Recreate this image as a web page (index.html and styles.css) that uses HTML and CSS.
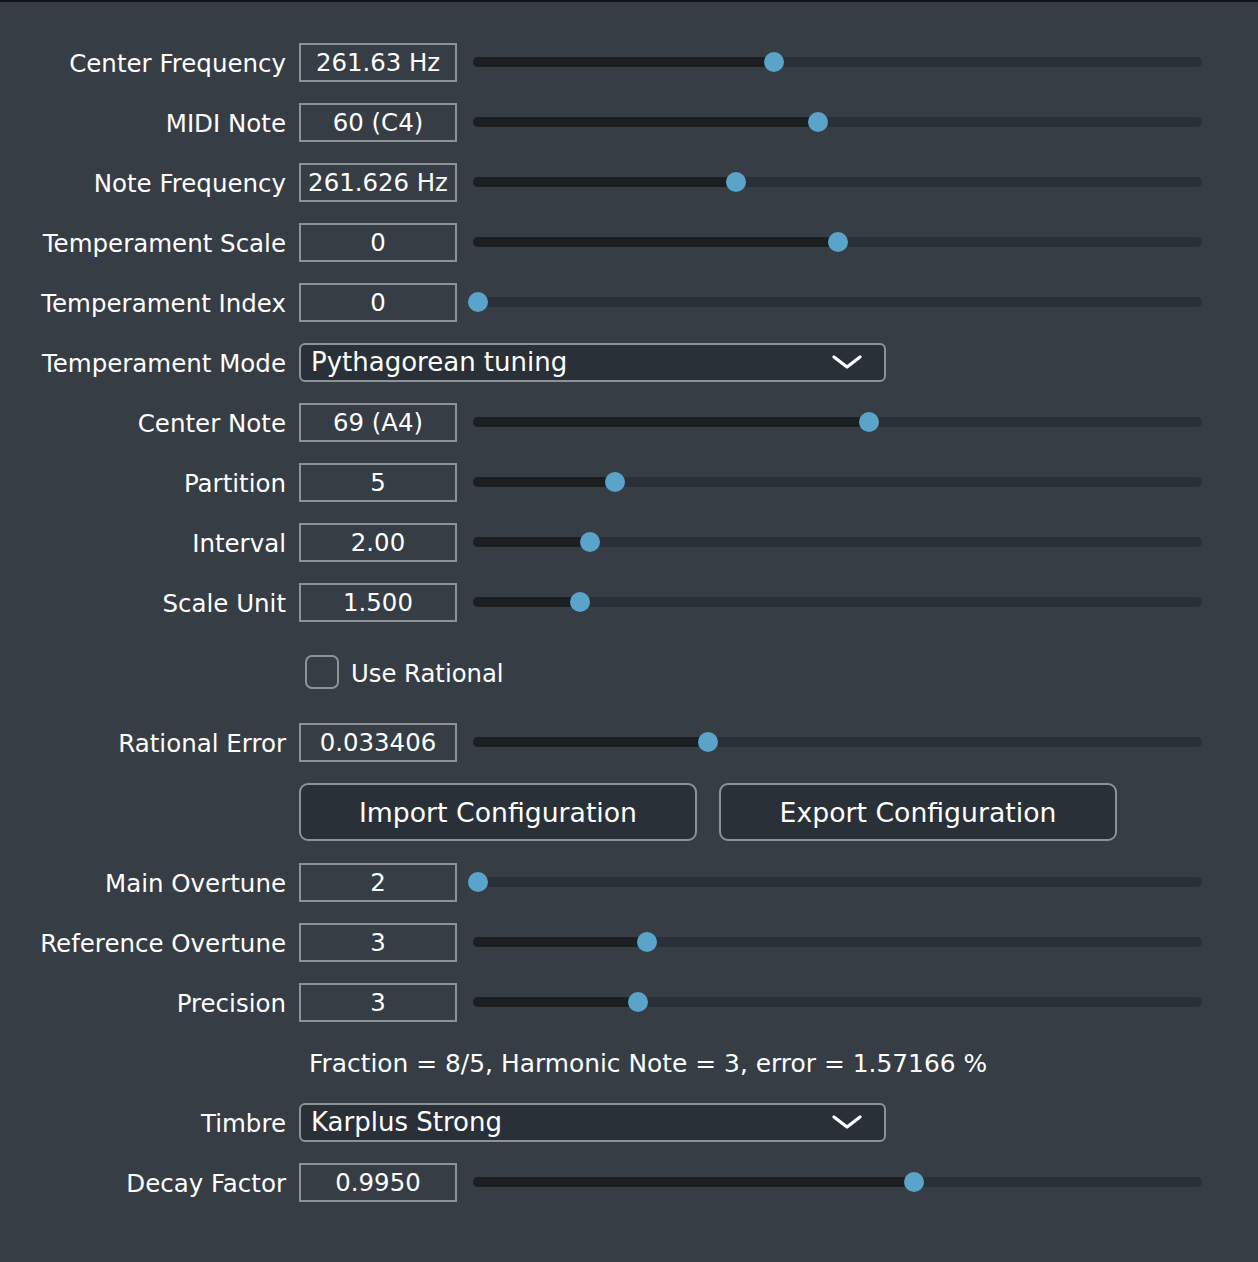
FILE: index.html
```html
<!DOCTYPE html>
<html>
<head>
<meta charset="utf-8">
<link rel="stylesheet" href="styles.css">
</head>
<body>
<div class="panel">
  <div class="row"><div class="label">Center Frequency</div><div class="value">261.63 Hz</div><div class="track"><div class="fill" style="width:301px"></div><div class="thumb" style="left:301px"></div></div></div>
  <div class="row"><div class="label">MIDI Note</div><div class="value">60 (C4)</div><div class="track"><div class="fill" style="width:345px"></div><div class="thumb" style="left:345px"></div></div></div>
  <div class="row"><div class="label">Note Frequency</div><div class="value">261.626 Hz</div><div class="track"><div class="fill" style="width:263px"></div><div class="thumb" style="left:263px"></div></div></div>
  <div class="row"><div class="label">Temperament Scale</div><div class="value">0</div><div class="track"><div class="fill" style="width:365px"></div><div class="thumb" style="left:365px"></div></div></div>
  <div class="row"><div class="label">Temperament Index</div><div class="value">0</div><div class="track"><div class="fill" style="width:5px"></div><div class="thumb" style="left:5px"></div></div></div>
  <div class="row"><div class="label">Temperament Mode</div><div class="combo"><span>Pythagorean tuning</span><svg class="chev" width="30" height="16" viewBox="0 0 30 16"><path d="M2 3 L15 13 L28 3" fill="none" stroke="#ffffff" stroke-width="3.2" stroke-linecap="round" stroke-linejoin="round"/></svg></div></div>
  <div class="row"><div class="label">Center Note</div><div class="value">69 (A4)</div><div class="track"><div class="fill" style="width:396px"></div><div class="thumb" style="left:396px"></div></div></div>
  <div class="row"><div class="label">Partition</div><div class="value">5</div><div class="track"><div class="fill" style="width:142px"></div><div class="thumb" style="left:142px"></div></div></div>
  <div class="row"><div class="label">Interval</div><div class="value">2.00</div><div class="track"><div class="fill" style="width:117px"></div><div class="thumb" style="left:117px"></div></div></div>
  <div class="row"><div class="label">Scale Unit</div><div class="value">1.500</div><div class="track"><div class="fill" style="width:107px"></div><div class="thumb" style="left:107px"></div></div></div>
  <div class="row tall"><div class="label"></div><div class="check"><div class="box"></div><span>Use Rational</span></div></div>
  <div class="row"><div class="label">Rational Error</div><div class="value">0.033406</div><div class="track"><div class="fill" style="width:235px"></div><div class="thumb" style="left:235px"></div></div></div>
  <div class="row tall"><div class="label"></div><div class="buttons"><div class="btn">Import Configuration</div><div class="btn">Export Configuration</div></div></div>
  <div class="row"><div class="label">Main Overtune</div><div class="value">2</div><div class="track"><div class="fill" style="width:5px"></div><div class="thumb" style="left:5px"></div></div></div>
  <div class="row"><div class="label">Reference Overtune</div><div class="value">3</div><div class="track"><div class="fill" style="width:174px"></div><div class="thumb" style="left:174px"></div></div></div>
  <div class="row"><div class="label">Precision</div><div class="value">3</div><div class="track"><div class="fill" style="width:165px"></div><div class="thumb" style="left:165px"></div></div></div>
  <div class="row"><div class="label"></div><div class="info">Fraction = 8/5, Harmonic Note = 3, error = 1.57166 %</div></div>
  <div class="row"><div class="label">Timbre</div><div class="combo"><span>Karplus Strong</span><svg class="chev" width="30" height="16" viewBox="0 0 30 16"><path d="M2 3 L15 13 L28 3" fill="none" stroke="#ffffff" stroke-width="3.2" stroke-linecap="round" stroke-linejoin="round"/></svg></div></div>
  <div class="row"><div class="label">Decay Factor</div><div class="value">0.9950</div><div class="track"><div class="fill" style="width:441px"></div><div class="thumb" style="left:441px"></div></div></div>
</div>
</body>
</html>
```

FILE: styles.css
```css
html, body {
  margin: 0;
  padding: 0;
  background: #363d45;
}
body {
  width: 1258px;
  height: 1262px;
  overflow: hidden;
  border-top: 2px solid #131517;
  box-sizing: border-box;
  font-family: "DejaVu Sans", Verdana, sans-serif;
  color: #ffffff;
}
.panel {
  padding-top: 30px;
  display: flex;
  flex-direction: column;
}
.row {
  height: 60px;
  display: flex;
  align-items: center;
}
.row.tall {
  height: 80px;
}
.label {
  width: 286px;
  margin-right: 13px;
  text-align: right;
  font-size: 24.5px;
  white-space: nowrap;
  flex: none;
  padding-top: 2px;
}
.value {
  width: 158px;
  height: 39px;
  box-sizing: border-box;
  border: 2px solid #8d9296;
  display: flex;
  align-items: center;
  justify-content: center;
  font-size: 24.4px;
  flex: none;
  padding-top: 1px;
}
.track {
  position: relative;
  margin-left: 16px;
  width: 729px;
  height: 10px;
  border-radius: 5px;
  background: #2a3038;
  flex: none;
}
.fill {
  height: 10px;
  border-radius: 5px 0 0 5px;
  background: #1b1f22;
}
.thumb {
  position: absolute;
  top: -5px;
  width: 20px;
  height: 20px;
  margin-left: -10px;
  border-radius: 50%;
  background: #5ba4c9;
}
.combo {
  width: 587px;
  height: 39px;
  box-sizing: border-box;
  border: 2px solid #8d9296;
  border-radius: 6px;
  background: #2a3038;
  display: flex;
  align-items: center;
  justify-content: space-between;
  padding: 0 22px 0 10px;
  font-size: 26px;
  flex: none;
}
.combo span {
  padding-bottom: 1px;
}
.chev {
  display: block;
}
.check {
  display: flex;
  align-items: center;
  margin-left: 6px;
  font-size: 24.3px;
}
.check span {
  padding-top: 2px;
}
.box {
  width: 34px;
  height: 34px;
  box-sizing: border-box;
  border: 2px solid #8d9296;
  border-radius: 7px;
  margin-right: 12px;
}
.buttons {
  display: flex;
  gap: 22px;
}
.btn {
  width: 398px;
  height: 58px;
  box-sizing: border-box;
  border: 2px solid #8d9296;
  border-radius: 9px;
  background: #2a3038;
  display: flex;
  align-items: center;
  justify-content: center;
  font-size: 26.7px;
  padding-top: 1px;
}
.info {
  margin-left: 10px;
  font-size: 24.9px;
  white-space: nowrap;
  padding-top: 2px;
}
```
